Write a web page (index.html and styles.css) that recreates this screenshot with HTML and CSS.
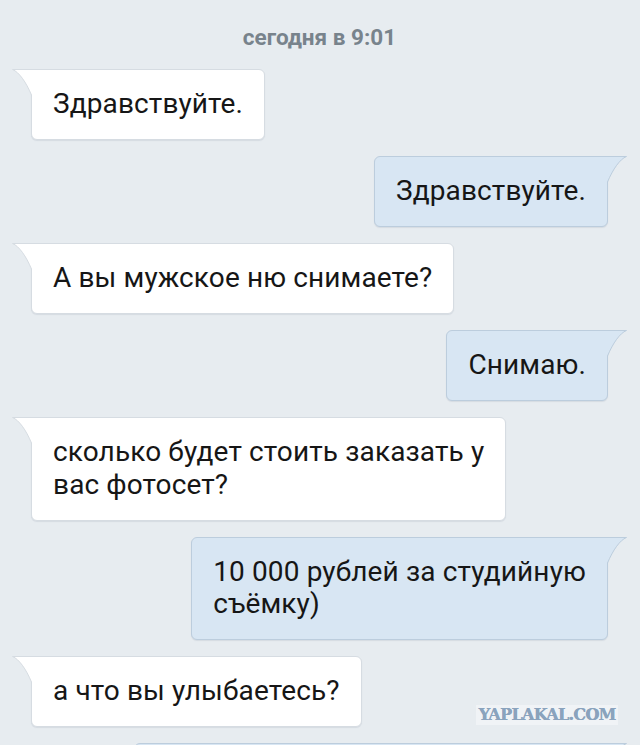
FILE: index.html
```html
<!DOCTYPE html>
<html lang="ru">
<head>
<meta charset="utf-8">
<title>Диалог</title>
<link rel="stylesheet" href="styles.css">
</head>
<body>
<div class="chat">
  <div class="date">сегодня в 9:01</div>

  <div class="msg in">Здравствуйте.<svg class="tail" width="21" height="27" viewBox="0 0 21 27"><path class="tf" d="M0.5 0.5 C7 3 14 13 19.5 26 L21 26 L21 0.5 Z"/><path class="ts" d="M21 0.5 L0.5 0.5 C7 3 14 13 19.5 26"/></svg></div>

  <div class="msg out">Здравствуйте.<svg class="tail" width="21" height="27" viewBox="0 0 21 27"><path class="tf" d="M0.5 0.5 C7 3 14 13 19.5 26 L21 26 L21 0.5 Z"/><path class="ts" d="M21 0.5 L0.5 0.5 C7 3 14 13 19.5 26"/></svg></div>

  <div class="msg in">А вы мужское ню снимаете?<svg class="tail" width="21" height="27" viewBox="0 0 21 27"><path class="tf" d="M0.5 0.5 C7 3 14 13 19.5 26 L21 26 L21 0.5 Z"/><path class="ts" d="M21 0.5 L0.5 0.5 C7 3 14 13 19.5 26"/></svg></div>

  <div class="msg out">Снимаю.<svg class="tail" width="21" height="27" viewBox="0 0 21 27"><path class="tf" d="M0.5 0.5 C7 3 14 13 19.5 26 L21 26 L21 0.5 Z"/><path class="ts" d="M21 0.5 L0.5 0.5 C7 3 14 13 19.5 26"/></svg></div>

  <div class="msg in">сколько будет стоить заказать у<br>вас фотосет?<svg class="tail" width="21" height="27" viewBox="0 0 21 27"><path class="tf" d="M0.5 0.5 C7 3 14 13 19.5 26 L21 26 L21 0.5 Z"/><path class="ts" d="M21 0.5 L0.5 0.5 C7 3 14 13 19.5 26"/></svg></div>

  <div class="msg out">10 000 рублей за студийную<br>съёмку)<svg class="tail" width="21" height="27" viewBox="0 0 21 27"><path class="tf" d="M0.5 0.5 C7 3 14 13 19.5 26 L21 26 L21 0.5 Z"/><path class="ts" d="M21 0.5 L0.5 0.5 C7 3 14 13 19.5 26"/></svg></div>

  <div class="msg in">а что вы улыбаетесь?<svg class="tail" width="21" height="27" viewBox="0 0 21 27"><path class="tf" d="M0.5 0.5 C7 3 14 13 19.5 26 L21 26 L21 0.5 Z"/><path class="ts" d="M21 0.5 L0.5 0.5 C7 3 14 13 19.5 26"/></svg></div>

  <div class="msg out next"><svg class="tail" width="21" height="27" viewBox="0 0 21 27"><path class="tf" d="M0.5 0.5 C7 3 14 13 19.5 26 L21 26 L21 0.5 Z"/><path class="ts" d="M21 0.5 L0.5 0.5 C7 3 14 13 19.5 26"/></svg></div>
</div>
<div class="watermark">YAPLAKAL.COM</div>
</body>
</html>
```

FILE: styles.css
```css
html, body {
  margin: 0;
  padding: 0;
}
body {
  background: #e7ecf0;
  font-family: Roboto, "Noto Sans", sans-serif;
  color: #161616;
  position: relative;
  height: 745px;
  overflow: hidden;
}
.chat {
  display: flex;
  flex-direction: column;
  gap: 16px;
  padding: 25px 32px 0 31px;
}
.date {
  align-self: center;
  font-size: 22.5px;
  font-weight: 700;
  line-height: 24px;
  color: #78838c;
  margin-bottom: 4px;
}
.msg {
  position: relative;
  font-size: 28px;
  line-height: 32.5px;
  letter-spacing: 0.12px;
  padding: 18.25px 21px;
  border: 1px solid #d6dce2;
  border-radius: 6px;
  box-sizing: border-box;
  box-shadow: 0 1px 1px rgba(80, 100, 120, 0.12);
  white-space: nowrap;
}
.msg.in {
  align-self: flex-start;
  background: #ffffff;
  border-top-left-radius: 0;
}
.msg.out {
  align-self: flex-end;
  background: #d8e6f3;
  border-color: #bccddd;
  border-top-right-radius: 0;
}
.msg.next {
  width: 474px;
  height: 71px;
}
.tail {
  position: absolute;
  top: -1px;
  overflow: visible;
}
.in .tail {
  left: -20px;
}
.out .tail {
  right: -20px;
  transform: scaleX(-1);
}
.tf {
  stroke: none;
}
.ts {
  fill: none;
  stroke-width: 1;
}
.in .tf { fill: #ffffff; }
.in .ts { stroke: #d6dce2; }
.out .tf { fill: #d8e6f3; }
.out .ts { stroke: #bccddd; }
.watermark {
  position: absolute;
  left: 476px;
  top: 705px;
  width: 142px;
  height: 20px;
  background: #f0f3f6;
  color: #8aa3bd;
  font-family: "DejaVu Serif", serif;
  font-weight: 700;
  font-size: 16px;
  line-height: 20px;
  text-align: center;
  letter-spacing: -0.7px;
  text-shadow: 0.4px 0 0 currentColor;
}
```
